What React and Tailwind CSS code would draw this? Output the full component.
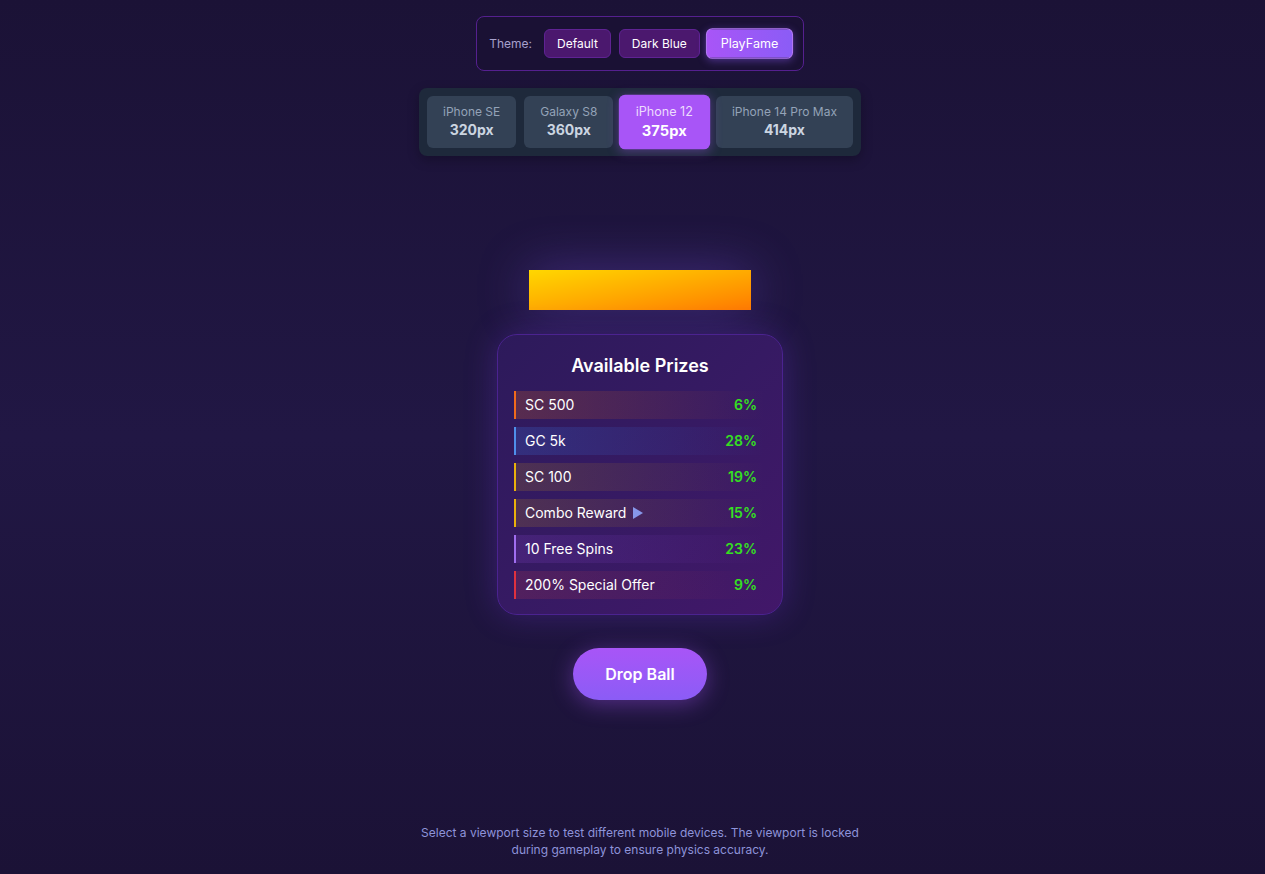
import { useState } from "react";

const themes = ["Default", "Dark Blue", "PlayFame"];

const devices = [
  { name: "iPhone SE", width: 320 },
  { name: "Galaxy S8", width: 360 },
  { name: "iPhone 12", width: 375 },
  { name: "iPhone 14 Pro Max", width: 414 },
];

const prizes = [
  { label: "SC 500", pct: "6%", bar: "border-[#f06a1c]", tint: "from-[#f97316]/20" },
  { label: "GC 5k", pct: "28%", bar: "border-[#4f8fea]", tint: "from-[#3b82f6]/20" },
  { label: "SC 100", pct: "19%", bar: "border-[#e9b10c]", tint: "from-[#eab308]/15" },
  { label: "Combo Reward", pct: "15%", bar: "border-[#e9b10c]", tint: "from-[#eab308]/15", icon: true },
  { label: "10 Free Spins", pct: "23%", bar: "border-[#a06ef0]", tint: "from-[#a855f7]/15" },
  { label: "200% Special Offer", pct: "9%", bar: "border-[#e0313f]", tint: "from-[#ef4444]/15" },
];

function PlayIcon() {
  return (
    <svg viewBox="0 0 12 14" className="ml-1.5 h-[14px] w-[12px]">
      <path d="M1 1 L11 7 L1 13 Z" fill="#8797ea" />
    </svg>
  );
}

export default function App() {
  const [theme, setTheme] = useState("PlayFame");
  const [device, setDevice] = useState(375);

  return (
    <div
      className="h-screen w-full overflow-hidden bg-linear-to-b from-[#1b1236] via-[#211744] to-[#1b1236] flex flex-col items-center pt-4 pl-[15px]"
      style={{ fontFamily: "Inter, 'Noto Sans', sans-serif" }}
    >
      {/* theme switch */}
      <div className="flex items-center h-[55px] px-3 rounded-lg border border-[#55208f] bg-[#1a1134]">
        <span className="text-xs text-[#a7a1cc] mr-3">Theme:</span>
        <div className="flex items-center gap-2">
          {themes.map((t) =>
            t === theme ? (
              <button
                key={t}
                onClick={() => setTheme(t)}
                className="h-[29px] px-[13px] rounded-md text-xs text-white bg-linear-to-r from-[#a855f7] to-[#8b5cf6] border border-[#b57af8] scale-105 shadow-[0_2px_8px_rgba(139,92,246,0.45)]"
              >
                {t}
              </button>
            ) : (
              <button
                key={t}
                onClick={() => setTheme(t)}
                className="h-[29px] px-[12px] rounded-md text-xs text-white bg-[#4b186e] border border-[#5f2393]"
              >
                {t}
              </button>
            )
          )}
        </div>
      </div>

      {/* device picker */}
      <div className="mt-[17px] flex gap-2 p-2 rounded-lg bg-[#1e293b] shadow-[0_4px_12px_rgba(0,0,0,0.25)]">
        {devices.map((d) => {
          const active = d.width === device;
          return (
            <button
              key={d.name}
              onClick={() => setDevice(d.width)}
              className={
                active
                  ? "h-[52px] px-4 rounded-md bg-[#a855f7] flex flex-col items-center justify-center scale-105 shadow-[0_2px_10px_rgba(168,85,247,0.35)]"
                  : "h-[52px] px-4 rounded-md bg-[#334155] flex flex-col items-center justify-center"
              }
            >
              <span className={active ? "text-xs leading-4 text-[#ecdcfd]" : "text-xs leading-4 text-[#94a3b8]"}>
                {d.name}
              </span>
              <span className={active ? "text-sm leading-5 font-bold text-white" : "text-sm leading-5 font-bold text-[#cbd5e1]"}>
                {d.width}px
              </span>
            </button>
          );
        })}
      </div>

      {/* game area */}
      <div className="w-[375px] flex flex-col items-center">
        <div className="mt-[114px] w-[222px] h-10 bg-linear-to-br from-[#ffd700] via-[#ffab00] to-[#ff7a00] shadow-[0_0_50px_rgba(120,80,220,0.4)]" />

        <div className="mt-6 w-[286px] rounded-[20px] border border-[#4b2390] bg-linear-to-br from-[#2d1a5b] via-[#361a63] to-[#421769] px-4 pt-[17px] pb-[15px] shadow-[0_0_32px_rgba(124,58,237,0.28)]">
          <h2 className="text-lg leading-7 font-semibold text-white text-center mb-[11px]">
            Available Prizes
          </h2>
          <div className="flex flex-col gap-2">
            {prizes.map((p) => (
              <div
                key={p.label}
                className={`h-7 flex items-center justify-between border-l-2 ${p.bar} bg-linear-to-r ${p.tint} to-transparent pl-[9px] pr-[9px]`}
              >
                <span className="flex items-center text-sm text-white">
                  {p.label}
                  {p.icon && <PlayIcon />}
                </span>
                <span className="text-sm font-semibold text-[#35e021]">{p.pct}</span>
              </div>
            ))}
          </div>
        </div>

        <button className="mt-[33px] h-[52px] px-8 rounded-full bg-linear-to-b from-[#a855f7] to-[#8b5cf6] text-white text-base font-semibold shadow-[0_4px_22px_rgba(168,85,247,0.4)]">
          Drop Ball
        </button>
      </div>

      <p className="mt-[124px] w-[444px] text-center text-xs leading-[17px] text-[#8e93da]">
        Select a viewport size to test different mobile devices. The viewport is locked during gameplay to ensure physics accuracy.
      </p>
    </div>
  );
}
